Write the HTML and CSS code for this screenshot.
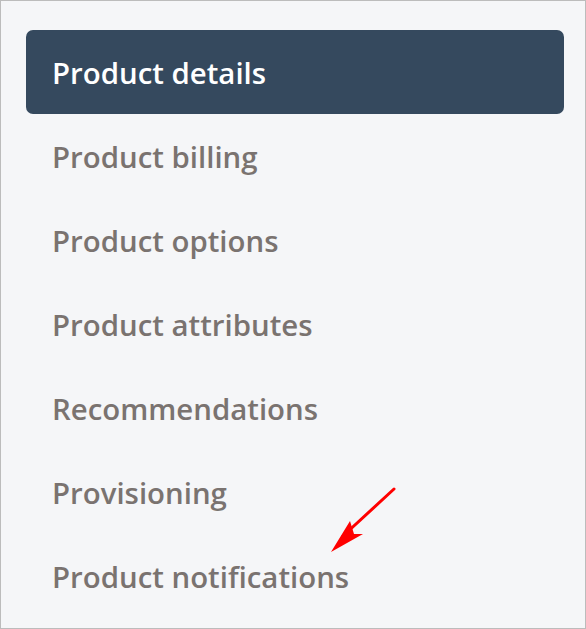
FILE: index.html
```html
<!DOCTYPE html>
<html>
<head>
<meta charset="utf-8">
<link rel="stylesheet" href="styles.css">
</head>
<body>
<div class="frame">
  <nav class="menu">
    <a class="item active">Product details</a>
    <a class="item">Product billing</a>
    <a class="item">Product options</a>
    <a class="item">Product attributes</a>
    <a class="item">Recommendations</a>
    <a class="item">Provisioning</a>
    <a class="item">Product notifications</a>
  </nav>
  <svg class="arrow" width="80" height="80" viewBox="0 0 80 80">
    <line x1="65" y1="8" x2="14" y2="55" stroke="#ff0000" stroke-width="3" stroke-linecap="round"/>
    <polygon points="2,71 21,40 25,53 34,53" fill="#ff0000"/>
  </svg>
</div>
</body>
</html>
```
FILE: styles.css
```css
html, body {
  margin: 0;
  padding: 0;
}
body {
  width: 586px;
  height: 629px;
  overflow: hidden;
}
.frame {
  position: relative;
  box-sizing: border-box;
  width: 586px;
  height: 629px;
  border: 1px solid #bcbcbc;
  background: #f5f6f8;
  padding: 29px 21px 0 25px;
}
.menu {
  display: flex;
  flex-direction: column;
}
.item {
  display: flex;
  align-items: center;
  height: 84px;
  padding-left: 26px;
  padding-top: 2px;
  box-sizing: border-box;
  border-radius: 7px;
  font-family: "Open Sans", "Noto Sans", sans-serif;
  font-weight: 600;
  font-size: 29.4px;
  color: #7a7370;
}
.item.active {
  background: #35495e;
  color: #ffffff;
}
.arrow {
  position: absolute;
  left: 328px;
  top: 480px;
}
```
